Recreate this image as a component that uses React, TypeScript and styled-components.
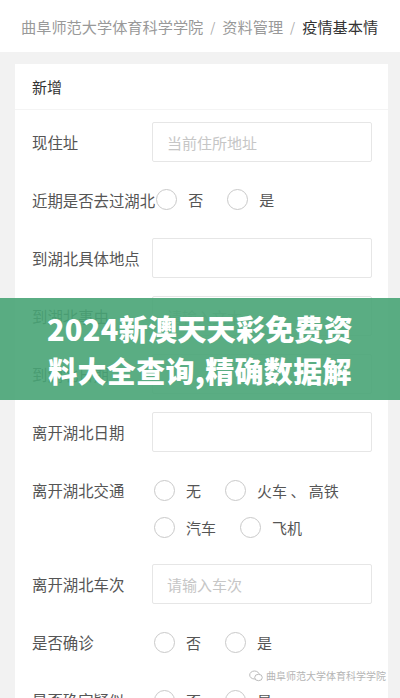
import React from 'react'
import styled, { createGlobalStyle } from 'styled-components'

const GlobalStyle = createGlobalStyle`
  html, body {
    margin: 0;
    padding: 0;
    background: #f2f2f2;
    overflow: hidden;
  }
  body {
    font-family: "Noto Sans CJK SC", "Noto Sans", sans-serif;
  }
  * { box-sizing: border-box; }
`

const Page = styled.div`
  position: relative;
  width: 400px;
  height: 698px;
  overflow: hidden;
  background: #f2f2f2;
`

const Header = styled.div`
  height: 52px;
  background: #fff;
  display: flex;
  align-items: center;
  padding-left: 21px;
  font-size: 15.2px;
  white-space: nowrap;
  overflow: hidden;
`

const Crumb = styled.span<{ $current?: boolean }>`
  color: ${(p) => (p.$current ? '#333' : '#999')};
`

const Sep = styled.span`
  color: #aaa;
  margin: 0 7px;
  font-size: 13px;
`

const Main = styled.div`
  padding: 12px 12px 0 15px;
`

const Card = styled.div`
  background: #fff;
`

const CardHeader = styled.div`
  height: 46px;
  line-height: 46px;
  padding: 0 17px;
  border-bottom: 1px solid #f4f4f4;
  font-size: 15px;
  color: #333;
`

const CardBody = styled.div`
  padding: 12px 16px 0 17px;
`

const FormItem = styled.div`
  display: flex;
  align-items: flex-start;
  margin-bottom: 18px;
`

const Label = styled.label`
  flex: 0 0 auto;
  min-width: 120px;
  line-height: 40px;
  font-size: 15.4px;
  color: #555;
  white-space: nowrap;
`

const Input = styled.input`
  flex: 1;
  min-width: 0;
  height: 40px;
  border: 1px solid #e6e6e6;
  border-radius: 2px;
  padding: 0 14px;
  font-family: inherit;
  font-size: 15px;
  color: #333;
  background: #fff;
  outline: none;
  &::placeholder {
    color: #c6c6c6;
  }
`

const RadioGroup = styled.div<{ $tight?: boolean }>`
  flex: 1;
  display: flex;
  flex-wrap: wrap;
  padding-top: ${(p) => (p.$tight ? 1 : 2)}px;
  padding-left: ${(p) => (p.$tight ? 1 : 2)}px;
`

const RadioItem = styled.div`
  display: flex;
  align-items: center;
  height: 37px;
  margin-right: 24px;
  font-size: 15px;
  color: #555;
  white-space: nowrap;
`

const Circle = styled.span`
  width: 21px;
  height: 21px;
  border: 1px solid #c9c9c9;
  border-radius: 50%;
  margin-right: 11px;
`

const Banner = styled.div`
  position: absolute;
  left: 0;
  right: 0;
  top: 298px;
  height: 102px;
  background: rgba(72, 164, 118, 0.9);
  display: flex;
  flex-direction: column;
  justify-content: center;
  align-items: center;
  color: #fff;
  font-size: 29px;
  font-weight: 900;
  line-height: 42px;
  letter-spacing: 0.3px;
`

const Watermark = styled.div`
  position: absolute;
  right: 14px;
  top: 668px;
  display: flex;
  align-items: center;
  gap: 3px;
  font-size: 10px;
  color: #b5b5b5;
`

type Field =
  | { kind: 'input'; label: string; placeholder?: string }
  | { kind: 'radio'; label: string; options: string[] }

const fields: Field[] = [
  { kind: 'input', label: '现住址', placeholder: '当前住所地址' },
  { kind: 'radio', label: '近期是否去过湖北', options: ['否', '是'] },
  { kind: 'input', label: '到湖北具体地点' },
  { kind: 'input', label: '到湖北事由', placeholder: '请输入文本' },
  { kind: 'input', label: '到湖北日期' },
  { kind: 'input', label: '离开湖北日期' },
  { kind: 'radio', label: '离开湖北交通', options: ['无', '火车 、 高铁', '汽车', '飞机'] },
  { kind: 'input', label: '离开湖北车次', placeholder: '请输入车次' },
  { kind: 'radio', label: '是否确诊', options: ['否', '是'] },
  { kind: 'radio', label: '是否确定疑似', options: ['否', '是'] },
]

function WechatIcon() {
  return (
    <svg width="14" height="12" viewBox="0 0 14 12" fill="none" stroke="#bbb" strokeWidth="1">
      <ellipse cx="5.5" cy="5" rx="4.8" ry="4" />
      <ellipse cx="9.5" cy="7.5" rx="3.8" ry="3.2" fill="#fff" />
    </svg>
  )
}

export default function App() {
  return (
    <Page>
      <GlobalStyle />
      <Header>
        <Crumb>曲阜师范大学体育科学学院</Crumb>
        <Sep>/</Sep>
        <Crumb>资料管理</Crumb>
        <Sep>/</Sep>
        <Crumb $current>疫情基本情</Crumb>
      </Header>
      <Main>
        <Card>
          <CardHeader>新增</CardHeader>
          <CardBody>
            {fields.map((f) => (
              <FormItem key={f.label}>
                <Label>{f.label}</Label>
                {f.kind === 'input' ? (
                  <Input placeholder={f.placeholder} readOnly />
                ) : (
                  <RadioGroup $tight={f.label.length > 7}>
                    {f.options.map((o) => (
                      <RadioItem key={o}>
                        <Circle />
                        {o}
                      </RadioItem>
                    ))}
                  </RadioGroup>
                )}
              </FormItem>
            ))}
          </CardBody>
        </Card>
      </Main>
      <Banner>
        <div>2024新澳天天彩免费资</div>
        <div>料大全查询,精确数据解</div>
      </Banner>
      <Watermark>
        <WechatIcon />
        曲阜师范大学体育科学学院
      </Watermark>
    </Page>
  )
}
